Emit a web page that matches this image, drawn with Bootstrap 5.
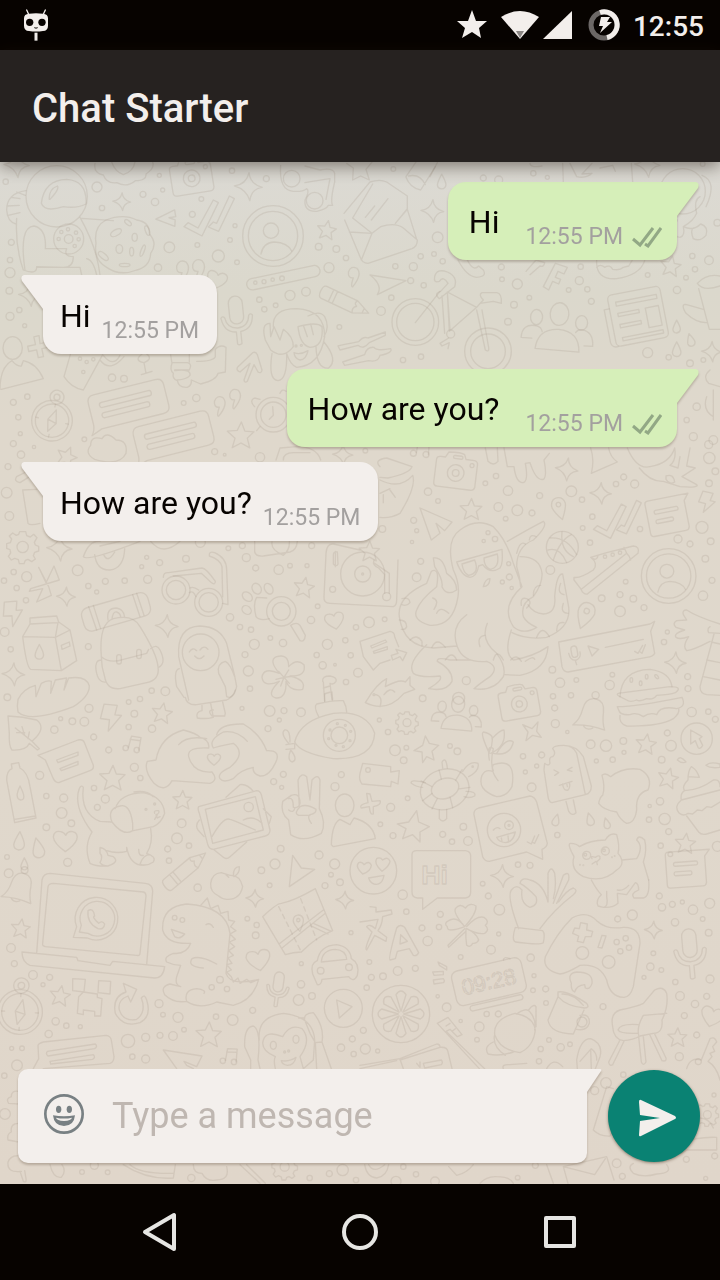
<!DOCTYPE html>
<html lang="en">
<head>
<meta charset="utf-8">
<meta name="viewport" content="width=device-width, initial-scale=1">
<title>Chat Starter</title>
<link href="https://cdn.jsdelivr.net/npm/bootstrap@5.3.0/dist/css/bootstrap.min.css" rel="stylesheet">
<style>
  body { font-family: Roboto, "Noto Sans", sans-serif; background: #070300; color: #070300; }
  svg { display: block; }
  .status-bar { height: 50px; color: #f3efec; padding: 0 16px 0 22px; }
  .status-time { font-size: 28px; line-height: 32px; font-weight: 500; }
  .app-bar { background: #262220; color: #f3efec; min-height: 112px; padding: 6px 32px 0; z-index: 2; box-shadow: 0 4px 16px rgba(30, 20, 10, .5); }
  .app-title { font-size: 40px; line-height: 48px; font-weight: 500; }
  .chat-area { background: linear-gradient(#dcdad4 0, #dbd8cc 130px, #dfd8cc 260px, #e0d8cc 60%, #e0d6ca 100%); }
  .wallpaper { fill: none; stroke: #a3968a; stroke-opacity: .22; stroke-width: 4; stroke-linejoin: round; stroke-linecap: round; }
  .wallpaper text { font-family: "Liberation Sans", sans-serif; }
  .thread { gap: 15px; padding: 20px 43px; }
  .msg { border-radius: 18px; filter: drop-shadow(0 2px 1px rgba(60, 40, 20, .25)); }
  .msg-out { background: #d6efb9; padding: 20px 15px 9px 21px; border-top-right-radius: 0; color: #d6efb9; gap: 26px; }
  .msg-in { background: #f3efec; padding: 21px 18px 9px 17px; border-top-left-radius: 0; color: #f3efec; gap: 11px; }
  .msg-text { font-size: 32px; line-height: 40px; margin-bottom: 9px; color: #070300; }
  .msg-time { font-size: 23px; line-height: 28px; color: #a3a09f; gap: 9px; }
  .msg-out .tail { left: 100%; top: 0; }
  .msg-in .tail { right: 100%; top: 0; }
  .composer { padding: 0 20px 21px 18px; gap: 21px; }
  .entry { background: #f3efec; color: #f3efec; border-radius: 10px 0 10px 10px; min-height: 94px; padding: 0 24px; gap: 26px; filter: drop-shadow(0 2px 1px rgba(60, 40, 20, .25)); }
  .entry .tail { left: 100%; top: 0; }
  .entry input { font-size: 36px; line-height: 44px; color: #070300; outline: 0; }
  .entry input::placeholder { color: #bfb7b1; opacity: 1; }
  .send { width: 92px; height: 92px; background: #0a8273; box-shadow: 0 1px 3px rgba(60, 40, 20, .5); padding-left: 6px; padding-top: 3px; }
  .system-nav { height: 96px; padding: 0 60px; }
</style>
</head>
<body class="min-vh-100 d-flex flex-column">
<div class="status-bar d-flex align-items-center justify-content-between">
  <svg width="28" height="36" viewBox="0 0 84 108" aria-label="System">
    <g fill="none" stroke="#f3efec" stroke-width="4" stroke-linecap="round"><path d="M14 9L21 24M70 9L63 24"/></g>
    <path fill="#f3efec" d="M21 20Q42 17 63 20Q78 21 78 34V56Q78 71 63 72Q42 75 21 72Q6 71 6 56V34Q6 21 21 20Z"/>
    <circle cx="23" cy="46" r="11" fill="#070300"/><circle cx="60" cy="46" r="11" fill="#070300"/>
    <path d="M37 62Q42 65 47 62" stroke="#070300" stroke-width="3" fill="none"/>
    <path d="M42 77V101" stroke="#f3efec" stroke-width="9"/>
  </svg>
  <div class="d-flex align-items-center">
    <svg width="176" height="40" viewBox="0 0 176 40" fill="#f3efec" aria-hidden="true">
      <path d="M15 5L19 16L30 16L22 23L24 33L15 27L5 33L8 23L0 16L11 16Z"/>
      <path d="M44 12Q63 0 82 12L63 34Z"/><path d="M59 26H67L63 33Z" fill="#8b8785"/>
      <path d="M86 34L115 6V34Z"/>
      <g fill="none" stroke-width="5"><circle cx="147" cy="20" r="13" stroke="#6c6866"/><path d="M143 7.500A13 13 0 1 1 150 32.500" stroke="#f3efec"/></g>
      <path d="M144 12H153L150 17H155L143 28L146 21H142Z"/>
    </svg>
    <span class="status-time pt-1">12:55</span>
  </div>
</div>
<header class="app-bar position-relative d-flex align-items-center">
  <h1 class="app-title mb-0">Chat Starter</h1>
</header>

<div class="chat-area position-relative flex-grow-1 d-flex flex-column">
  <svg class="wallpaper position-absolute top-0 start-0 w-100 h-100" viewBox="0 162 720 1022" preserveAspectRatio="xMidYMin slice" aria-hidden="true">
    <defs>
      <g id="dot"><circle r="10"/></g>
      <g id="star"><path d="M2-38L12-12L38-10L19 8L26 36L1 22L-24 35L-16 8L-38-12L-10-14Z"/></g>
      <g id="spark"><path d="M2-38Q5-7 38 2Q8 6 4 38Q-5 8-38-2Q-6-6 2-38Z"/></g>
      <g id="love"><path d="M0 32Q-34 8-36-12Q-34-32-14-28Q-3-26 1-17Q8-31 22-28Q40-24 34-4Q28 12 0 32Z"/></g>
      <g id="drop"><path d="M0-28Q16 0 16 12Q14 26 0 27Q-15 26-16 12Q-15 0 0-28Z"/></g>
      <g id="plane"><path d="M-48-48L48-6L26 20L0-2L12 28L-14 48Z"/></g>
      <g id="ticks"><path d="M-68 32L-56 20L-26 36L20-48L35-40L-14 60ZM5 33L20 18L30 22L68-60L83-52L36 46Z"/></g>
      <g id="user"><circle r="91"/><circle r="74"/><circle cx="-6" cy="-16" r="23"/><path d="M-36 54Q-30 20 4 18Q44 20 56 45"/></g>
      <g id="cam"><path d="M-62-34Q-62-44-50-44H-36L-28-60Q10-64 20-58L26-44H52Q62-42 62-32V36Q60 46 50 46H-50Q-62 46-62 34Z"/><circle r="25"/><circle r="10"/><circle cx="46" cy="-28" r="6"/><rect x="-12" y="-52" width="28" height="9" rx="4"/></g>
      <g id="compass"><circle r="61"/><circle r="50"/><circle cy="-72" r="21"/><circle cy="-72" r="9"/><path d="M6-34L14 6L-6 34L-13-2ZM-13-2L14 6M0-50V-42M0 50V42M-50 0H-42M50 0H42"/></g>
      <g id="mic"><rect x="-22" y="-65" width="44" height="88" rx="22"/><path d="M-50 0Q-44 46-6 48V86Q0 92 8 86V48Q46 44 50 0Q44-8 38 0Q34 34 0 36Q-34 34-38 0Q-44-8-50 0Z"/></g>
      <g id="note"><path d="M-60-50Q-60-60-50-60H80L64-40V44Q62 54 52 54H-50Q-60 54-60 44Z"/><rect x="-36" y="-26" width="76" height="12" rx="5"/><rect x="-36" y="4" width="56" height="12" rx="5"/></g>
      <g id="letter"><path d="M-110-30Q-110-52-90-52H92Q112-52 112-32V28Q112 48 92 48H-90L-122 60Q-110 46-110 30Z"/><rect x="-80" y="-26" width="152" height="15" rx="7"/><rect x="-80" y="4" width="140" height="15" rx="7"/></g>
      <g id="gear"><path d="M-9-46H9L12-34L23-30L33-38L43-28L35-14L38-6L48-2V12L36 16L32 26L38 36L27 44L16 37L8 40L4 50H-10L-13 38L-24 34L-34 39L-43 28L-36 18L-38 8L-48 4V-10L-37-13L-33-24L-40-33L-30-42L-19-35L-12-38Z"/><circle r="17"/></g>
      <g id="bell"><path d="M-55 36Q-32 16-26-18Q-18-60 16-56Q46-50 44-14Q42 20 52 46Q0 30-55 36Z"/><circle cx="14" cy="-68" r="12"/><path d="M-18 38Q-6 52 12 42"/></g>
      <g id="tune"><circle cx="-22" cy="22" r="10"/><circle cx="20" cy="26" r="10"/><path d="M-12 20L-4-24L32-22L28 26M-8-12L31-10"/></g>
      <g id="team"><ellipse cx="0" cy="-50" rx="28" ry="34"/><path d="M-66 58Q-62-2 0-4Q64-2 66 60Z"/><ellipse cx="-68" cy="-36" rx="18" ry="23"/><ellipse cx="68" cy="-28" rx="18" ry="22"/><path d="M-78 28H-110Q-110-16-66-10Q-52-8-48 6M80 40H106Q106-4 70-8Q58-8 52 2"/></g>
      <g id="bolt"><path d="M-22-44L22-40L14-8L36-6L-8 46L-4 8L-34 4Z"/></g>
      <g id="pin"><path d="M0 48Q-30 4-28-14Q-24-42 0-42Q26-40 28-14Q28 4 0 48Z"/><circle cy="-14" r="9"/></g>
      <g id="plus"><path d="M-8-32H8L6-8L32-8V8H8L8 32H-8L-8 8H-32V-8H-8Z"/></g>
      <g id="quote"><path d="M-14-16Q-6-38 14-28Q34-8 0 34Q-8 34 2 4Q-16 6-14-16Z"/></g>
      <g id="pencil"><path d="M-76-22Q-88-22-88 0Q-88 22-76 22H38L88 0L38-22ZM-50-22V22M-36-22V22M38-22Q28-10 42-4Q28 8 38 22M68-8V8"/></g>
    </defs>

    <g transform="translate(0 160) scale(.333333)" data-set="top-left">
      <circle cx="170" cy="109" r="92"/><path d="M124 130Q132 60 200 58Q262 62 258 132Q230 146 190 140Q134 158 124 130ZM148 118Q146 88 172 78Q180 86 150 118M78 92Q20 100 20 150Q22 185 48 192M76 106L50 96M60 116L34 112M58 136L22 138M60 158L24 166M50 175Q45 260 70 330Q110 345 110 322H240L245 345M75 330Q56 200 102 198Q140 206 136 266L200 266Q190 290 220 290Q220 322 190 322L110 320M240 172Q290 260 300 345M245 175L340 182M260 296Q280 300 290 345"/>
      <circle cx="206" cy="237" r="45"/><circle cx="206" cy="237" r="13"/><g><circle cx="176" cy="237" r="5"/><circle cx="184" cy="216" r="5"/><circle cx="204" cy="208" r="5"/><circle cx="228" cy="218" r="5"/><circle cx="236" cy="238" r="5"/><circle cx="224" cy="258" r="5"/></g>
      <path d="M318 180Q370 160 410 180Q450 186 448 222Q474 250 452 280Q450 320 410 330Q360 350 320 322Q280 300 288 250Q280 200 318 180Z"/>
      <g><ellipse cx="348" cy="218" rx="18" ry="9" transform="rotate(-30 348 218)"/><ellipse cx="404" cy="232" rx="8" ry="12"/><ellipse cx="358" cy="267" rx="10" ry="13"/><ellipse cx="395" cy="275" rx="6" ry="13"/><ellipse cx="310" cy="288" rx="18" ry="8" transform="rotate(40 310 288)"/><ellipse cx="374" cy="315" rx="16" ry="5"/><ellipse cx="428" cy="272" rx="5" ry="18" transform="rotate(20 428 272)"/><ellipse cx="384" cy="188" rx="12" ry="6" transform="rotate(40 384 188)"/><ellipse cx="442" cy="212" rx="6" ry="15" transform="rotate(-20 442 212)"/></g>
      <path d="M285 10Q280 40 310 45Q320 72 350 68Q380 84 406 62Q440 62 438 42Q465 25 458 6M335 6Q345 35 370 44Q400 35 405 6"/>
      <path d="M842 16Q836 90 880 94Q908 96 920 86Q930 92 915 120Q912 156 950 154Q980 148 985 136L998 136Q990 124 1004 66V40Q1000 22 960 30L915 18"/><circle cx="875" cy="56" r="25"/><circle cx="944" cy="122" r="25"/><path d="M915 68Q960 60 990 56L978 118"/>
      <path d="M1032 160L1110 66Q1140 56 1160 66L1222 108V146L1186 190M1058 174L1118 72M1058 174L1114 218M1048 216L1116 220L1142 200Q1186 186 1210 204L1252 240Q1252 260 1236 266L1104 310Q1086 310 1080 290L1034 180M1116 220L1084 300M1186 190L1222 148L1250 238M1096 172L1124 138M1114 180L1164 116"/>
      <rect x="738" y="336" width="224" height="34" rx="17" transform="rotate(-12 850 353)"/><circle cx="766" cy="368" r="5"/><circle cx="792" cy="365" r="6"/><circle cx="818" cy="359" r="5"/><circle cx="846" cy="355" r="7"/>
      <path d="M1110 345L1218 362L1132 404Q1150 376 1110 345Z"/>
      <circle cx="1246" cy="486" r="70"/><circle cx="1246" cy="486" r="56"/>
      <path d="M820 500Q816 446 890 446Q974 450 974 530Q960 618 890 622Q870 614 860 580M796 540Q782 490 810 490L812 530L822 500L840 540L850 508Q880 530 880 560Q850 600 812 570ZM894 500Q950 484 966 500Q972 560 930 562Q900 556 894 500M910 496L922 530M932 492L940 524M924 468Q960 450 974 470Q990 500 972 530M816 580Q804 660 834 662Q862 660 860 580M948 560Q950 628 986 624Q1016 600 972 546M882 578Q900 586 924 572Q918 600 900 600Q884 596 882 578"/><circle cx="888" cy="558" r="3"/><circle cx="904" cy="556" r="3"/>
      <path d="M1014 558Q1030 554 1076 545Q1090 528 1104 534L1156 516L1156 526L1108 548Q1090 570 1074 556L1020 570ZM1028 606L1094 584Q1100 560 1122 562Q1130 574 1172 566Q1180 578 1140 586Q1134 608 1106 602L1034 616Z"/>
      <path d="M732 660L750 610L720 636Q706 630 714 620L758 578Q768 574 772 584L786 630Q784 642 774 636L762 614L742 664Q734 670 732 660"/>
      <path d="M512 585L516 610Q508 630 520 640Q516 656 532 662Q536 684 562 682Q576 676 574 660L602 672Q650 660 654 640L676 636L678 562Q660 552 646 568L646 590Q640 604 590 604M516 608H562Q578 612 568 630H524M524 632Q574 626 570 646Q560 658 532 660M568 584V606"/>
      <path d="M212 580L192 650Q214 684 250 690L308 584M300 600Q330 640 372 590M310 586Q340 624 360 586M426 582Q400 602 432 608Q460 596 440 582M432 608L438 640M424 644L456 634"/><circle cx="240" cy="596" r="5"/><circle cx="260" cy="606" r="5"/><circle cx="280" cy="598" r="5"/><circle cx="250" cy="636" r="5"/>
      <ellipse cx="38" cy="564" rx="29" ry="34"/><path d="M0 688Q0 622 36 602Q50 620 64 618L70 602Q110 610 130 656L4 688"/>
      <path d="M284 898Q252 880 272 856Q272 826 306 836Q320 812 348 840Q384 840 378 880Q360 920 284 898"/>
      <circle cx="820" cy="764" r="52"/><circle cx="820" cy="764" r="38"/><path d="M818 740L820 766L808 778M764 740Q746 722 764 714L780 718M780 800L770 812M840 700Q846 684 858 694M828 900L840 864L890 860Q950 860 962 900M850 900Q850 878 880 878H930"/>
      <path d="M1218 50L1252 0M1218 52Q1230 84 1262 90L1306 20M1226 48Q1260 40 1276 74M1040 10L1060 24L1058 60L1082 48L1108 60L1098 28L1116 6"/>
    </g>

    <g transform="translate(430 160) scale(.333333)" data-set="top-right">
      <path d="M0 50L22 8M398 10L400 66M420 10L440 50Q470 56 486 40L456 42L486 10M510 24L548 16L556 34M604 10L608 66M300 10Q300 24 336 18"/>
      <circle cx="758" cy="94" r="68"/><path d="M816 46Q864 64 828 140M742 180Q720 230 750 232Q766 228 760 200Q790 184 800 160Q790 120 810 110M760 200Q790 214 812 192Q836 200 828 226Q810 246 790 236Q780 212 790 204"/>
      <path d="M84 300Q110 350 140 352Q172 350 160 330L146 318Q130 336 112 300M288 334L318 300M300 344L330 318Q342 322 344 308L318 300M340 380L376 310L412 322L402 342L384 334L376 352L392 358L386 372L368 364L356 390ZM500 300Q496 360 560 356Q630 346 644 302M500 322Q510 310 524 322Q540 312 548 328Q570 332 580 322L596 318L606 302"/>
      <path d="M14 350Q20 324 52 336Q84 350 74 380L28 416Q10 400 32 394L54 370Q40 346 28 364Q10 370 14 350M52 396L140 442L150 430L190 424L214 430Q216 400 200 398H156Q144 404 160 420L140 442L58 514ZM52 396L60 508M36 408L44 520M140 450L166 570Q178 578 176 562L156 450"/><circle cx="62" cy="522" r="12"/><path d="M56 534L30 550L36 558L58 548L54 566"/><circle cx="174" cy="574" r="70"/><circle cx="174" cy="574" r="52"/><path d="M-44 488L30 394"/>
      <g transform="rotate(-11 628 468)"><rect x="544" y="390" width="160" height="156" rx="14"/><path d="M544 430H528V530Q530 548 550 546M566 414H690V426H566ZM566 448H630V458H566ZM566 482H630V492H566ZM650 448H690V508H650ZM566 522H690V532H566Z"/></g>
      <path d="M802 370Q830 340 870 348M802 370Q820 396 870 378M806 386L838 508H870M820 448L770 434Q750 430 768 460Q800 490 832 488"/>
    </g>

    <g transform="translate(430 340) scale(.333333)" data-set="right-band">
      <path d="M840 90Q816 110 836 130L870 140M850 150V240M830 170Q816 210 850 230"/>
    </g>

    <g transform="translate(0 440) scale(.333333)" data-set="mid-left">
      <path d="M50 110L90 90L98 104L60 128Q40 124 50 110M68 150L110 148M68 150L84 250Q90 258 120 250M250 350Q268 300 300 304M250 350Q260 366 420 304M300 318L360 304M284 344Q290 392 330 390Q372 384 374 326M312 346Q324 370 344 336M452 304Q490 350 540 304M764 304V336Q768 350 790 348L870 336Q890 330 892 304M816 306Q812 330 850 346Q870 330 868 304"/>
      <path d="M116 382L138 428L162 378L178 420L92 446L88 454L128 446L110 486L154 466L146 440L116 382"/>
      <path d="M68 590L90 552V534L170 528L176 546L210 570L230 662L184 692L92 688Q80 684 68 590ZM90 552L174 548L166 592L68 590M166 592L184 692M166 592L210 570M184 616L208 606L210 618L186 628Z"/>
      <rect x="244" y="480" width="206" height="72" rx="22" transform="rotate(-16 346 512)"/><path d="M266 500L290 570M280 496L302 566M398 464L420 530M410 460L432 526M324 540Q318 504 350 504Q372 508 374 532M336 538Q338 514 350 516Q362 520 362 532M304 650Q296 550 340 536Q400 522 420 560Q470 640 474 680Q480 720 440 728L360 746Q320 750 314 710Q304 680 304 650Q330 672 370 658L440 640L446 628M304 660Q284 660 288 690Q294 730 318 726M452 626Q470 610 480 630Q500 670 476 682"/><rect x="350" y="644" width="14" height="28" rx="7"/><rect x="410" y="628" width="14" height="28" rx="7"/>
      <circle cx="528" cy="450" r="42"/><circle cx="528" cy="450" r="29"/><circle cx="626" cy="487" r="42"/><circle cx="626" cy="487" r="29"/><path d="M570 444Q580 438 596 450M568 458Q580 450 588 470M490 412Q490 396 506 398L606 384Q620 386 646 424Q646 438 632 426L604 400L520 408M668 470L666 380Q660 358 628 348Q626 332 644 338Q680 354 680 390L684 494L668 490"/>
      <path d="M566 780L536 650Q530 560 600 558Q660 560 680 610L704 708L710 740Q700 780 680 770L676 740L656 700Q650 670 676 664Q690 670 704 710M538 686Q520 690 530 740L552 772M568 636Q578 620 590 632M600 630Q612 614 624 628M584 648Q598 664 612 648"/><circle cx="602" cy="637" r="55"/>
      <path d="M800 474L770 472Q758 490 768 530Q780 544 808 536"/><circle cx="844" cy="514" r="44"/><circle cx="844" cy="514" r="27"/><path d="M872 556Q890 544 900 556L916 586Q914 608 900 602Z"/><g><ellipse cx="770" cy="446" rx="13" ry="17" transform="rotate(-30 770 446)"/><ellipse cx="806" cy="446" rx="12" ry="17" transform="rotate(-30 806 446)"/><ellipse cx="742" cy="470" rx="12" ry="17" transform="rotate(-50 742 470)"/><ellipse cx="740" cy="510" rx="12" ry="15" transform="rotate(-50 740 510)"/></g>
      <path d="M838 700Q804 660 830 650Q866 640 866 680Q890 654 912 674Q920 710 870 708Q920 720 908 748Q870 756 858 724Q860 776 828 774Q796 766 838 724Q790 744 786 712Q790 680 838 700ZM852 712L836 694M852 712L866 690M852 712L882 708M852 712L868 730M852 712L842 738M852 712L828 718"/>
      <path d="M54 778Q70 746 106 736L108 770L124 730Q144 720 154 724L152 760L166 720L200 714L192 750L206 714Q260 706 268 738Q268 770 220 800Q90 850 54 816Q50 800 54 778"/>
      <path d="M968 724Q966 708 990 708Q1012 712 1008 724Q1000 736 990 730L996 780M970 726L974 784M970 744L990 738M972 762L992 756"/>
      <path d="M1080 330L1000 312Q980 310 978 340L972 470Q970 490 990 490L1180 500Q1190 496 1190 480L1194 360M1006 334V380M1000 344Q1000 334 1012 336L1014 372Q1010 382 1000 372Z"/><circle cx="998" cy="448" r="9"/><circle cx="1088" cy="402" r="66"/><circle cx="1088" cy="402" r="24"/><circle cx="1088" cy="402" r="3"/>
    </g>

    <g transform="translate(360 440) scale(.333333)" data-set="mid-right">
      <path d="M60 80Q40 60 80 54L156 80Q150 100 84 114L60 112M60 120Q120 150 158 106Q170 140 120 220Q90 236 60 232M60 160L90 146M70 188V164M106 172L90 150M376 24L384 64Q400 80 414 64L412 24M432 24L442 80H462Q468 130 490 128Q506 122 496 70L510 68Q528 124 550 118Q562 110 552 60L568 40M692 24Q704 60 694 100L740 80L772 66Q750 50 746 24M802 24Q830 90 870 80Q930 70 944 24M838 84Q870 126 910 124L960 140Q1020 144 1010 134L966 110L1006 84L980 78L990 24M944 24Q950 60 930 76L954 84L960 50M918 108Q940 100 944 126Q930 136 918 118Z"/>
      <path d="M294 470Q300 430 280 390Q256 300 300 270Q350 232 400 260Q440 300 460 370L486 440Q420 500 460 560Q490 586 530 562Q500 550 490 530Q480 490 520 470Q548 430 546 400Q540 350 480 350M442 304Q500 270 550 244Q566 256 520 300Q470 320 470 380Q480 410 482 440M294 470Q280 560 210 556Q156 540 170 510Q180 480 230 440Q240 380 214 394L200 430Q110 470 118 530Q130 620 220 624L290 618M220 354Q250 350 260 400Q290 420 290 450Q260 470 246 440Q250 420 224 380ZM320 524Q270 560 292 620Q310 670 380 664Q420 680 390 710Q360 730 342 746Q400 756 430 710Q440 680 410 640Q360 600 382 550M200 614Q140 670 160 700Q180 714 240 708Q250 720 206 746Q260 756 276 724Q280 690 232 664Q230 650 270 660L330 660M454 570Q430 640 460 660Q520 650 564 620Q560 690 480 706L434 704M456 578Q500 600 560 592Q640 560 624 490L608 402Q590 400 584 470Q590 520 550 522Q520 520 504 494"/>
      <path d="M290 366L426 328Q430 370 420 384Q390 404 368 374L356 378Q350 410 330 412Q306 410 290 366ZM306 372L344 360Q360 400 326 406Q310 400 306 372ZM372 354L412 342Q420 384 390 388Q372 380 372 354Z"/>
      <path d="M126 476Q148 470 150 488Q140 500 126 494M118 540Q140 540 140 560Q136 570 124 568M150 600Q170 580 186 604V618M216 622Q230 590 256 622M218 474Q240 480 222 508M230 520Q240 496 266 520M370 440Q376 416 390 416Q388 440 370 440M520 466Q520 436 542 436M484 496Q480 470 500 476Q520 486 500 504M530 592Q546 552 568 590M590 572Q590 544 612 548M624 520Q600 520 610 490M612 464Q590 460 602 430M452 660Q470 640 484 664M496 664Q520 646 524 658M256 660Q276 630 290 660M360 620Q350 590 374 586M400 660Q410 624 430 660M470 340Q480 300 496 312M508 300Q510 280 528 290"/>
      <circle cx="607" cy="322" r="48"/><path d="M570 294Q620 290 650 344M580 360Q600 300 634 284M564 330Q600 320 620 368M606 276Q600 330 640 350"/>
      <path d="M642 412Q660 416 700 390Q716 370 692 352L740 338L820 318Q840 320 834 340L682 462Q670 464 662 446L642 420ZM664 448L800 340L792 322M800 340Q810 350 812 360M692 352Q710 366 714 346"/><circle cx="735" cy="350" r="5"/><circle cx="758" cy="344" r="5"/><circle cx="780" cy="338" r="5"/>
      <path d="M596 606L870 552L884 544L872 574L884 640Q880 650 860 652L624 696Q610 696 606 680Z"/><rect x="634" y="618" width="18" height="34" rx="9" transform="rotate(-10 643 635)"/><path d="M626 640Q632 664 650 660Q664 652 660 636M646 662L650 674M684 618L716 628L696 648ZM736 622L850 598M824 634L834 640L848 616M838 634L846 640L856 614"/>
      <path d="M1080 552Q1010 530 980 510Q966 510 970 524L980 540L950 542Q936 550 948 562L974 570Q940 580 948 592Q960 600 986 590Q966 620 980 632Q1000 630 1050 604M1050 560Q1040 566 1046 578L1080 580M1062 582L1020 740Q1020 760 1040 764L1080 766M1054 606L1080 612M1040 660L1080 668M1030 710L1080 720"/>
      <path d="M0 604L90 574Q104 576 104 590L116 620M0 604L10 650L40 690L60 670L90 660M32 618L76 600L80 606L36 624ZM40 634L82 620L82 628L42 640ZM94 646L114 640L108 628L140 638L128 662L120 650L98 660Z"/>
      <path d="M16 788Q50 730 80 716L76 740Q120 716 136 726L150 710L150 736L164 748L132 760Q80 820 16 788ZM48 764Q70 770 60 800M72 764Q90 740 104 756M42 360Q36 376 56 384L74 404V460M44 370L88 400V460"/><circle cx="80" cy="470" r="12"/><circle cx="42" cy="764" r="3"/>
      <path d="M780 770Q784 690 870 688Q930 696 936 740"/><g><ellipse cx="814" cy="720" rx="4" ry="7"/><ellipse cx="860" cy="710" rx="4" ry="7"/><ellipse cx="890" cy="710" rx="4" ry="7" transform="rotate(-40 890 710)"/><ellipse cx="842" cy="730" rx="4" ry="7"/></g>
    </g>

    <g transform="translate(0 680) scale(.333333)" data-set="low-left">
      <path d="M24 108Q70 110 110 120Q136 140 110 170L96 184L118 206L112 210L88 190Q80 212 36 210Q26 200 28 160ZM46 144L96 184M66 140L74 166M50 158H74M84 176L88 156"/>
      <path d="M34 252L56 248L60 264Q84 276 90 320L108 414L44 428L20 300Q20 272 36 266ZM44 418L106 408M60 318Q82 360 62 360Q42 356 60 318"/>
      <path d="M114 226L234 180Q250 176 254 190L280 256Q282 268 270 272L176 308Q166 308 160 296L136 240Z"/><path d="M170 240L234 216V226L174 248ZM180 266L234 244V254L184 272Z"/>
      <path d="M276 456Q226 390 234 340Q240 310 250 322Q240 400 300 424L336 426M346 386Q360 340 430 338Q490 350 494 400Q484 430 460 440L400 452M336 426Q320 386 360 378Q390 370 398 430V452Q370 470 336 426M276 456Q250 500 270 550Q290 560 324 558Q360 546 340 530L324 526Q320 506 300 502V520Q310 530 300 548Q306 558 324 558M320 512Q350 522 380 514V502Q390 556 430 556M452 446Q460 490 440 520Q470 530 460 546Q440 560 420 552Q430 524 450 524M416 508Q416 530 430 526M402 336Q440 330 460 350M464 400Q460 390 476 392Q480 400 468 404L472 414L480 410M472 404L464 418"/><circle cx="438" cy="388" r="3"/><circle cx="464" cy="372" r="3"/>
      <path d="M516 302Q496 340 462 310Q430 270 442 244L468 240Q480 170 550 150Q590 160 600 172Q630 180 626 204Q560 200 566 230Q580 280 636 276Q656 300 630 310L516 302M536 194Q560 166 620 176M650 164Q660 130 730 132Q780 160 800 212Q840 210 830 240Q810 290 780 288Q756 280 760 262Q720 270 700 296Q670 310 660 296Q650 280 690 262Q740 220 700 190Q650 200 640 204Q624 180 670 156Q710 150 742 184"/>
      <path d="M596 380L770 332Q780 332 784 344L810 450Q810 464 796 468L640 508Q628 508 624 496L598 400Q592 386 596 380ZM616 388L766 350L790 450L638 490ZM636 470Q670 410 690 418Q700 420 766 450M730 420Q760 404 786 430M678 352L720 314Q740 310 760 334M640 508L670 532Q680 540 690 530L740 486M598 420Q584 436 594 450L612 470M790 386L814 410L808 430"/><circle cx="746" cy="381" r="14"/>
      <path d="M898 380L894 300Q904 276 920 290L930 360L936 300Q954 280 960 300L958 386Q980 430 964 460Q910 490 872 464L866 420Q840 400 848 364Q870 350 874 346Q900 336 900 370Q896 386 880 382Q880 350 866 356M866 390Q880 400 884 386M900 380Q920 370 948 388Q950 400 930 404Q920 410 934 430M900 380Q880 400 896 406H930"/>
      <ellipse cx="1034" cy="376" rx="28" ry="34"/><path d="M994 494Q996 430 1020 418L1050 434L1062 414Q1120 430 1126 476L1000 500Z"/>
      <path d="M956 110Q940 80 950 72Q1000 60 1030 62Q1040 80 1040 96M974 64V42M998 60L996 36M884 186Q900 120 1000 100Q1100 90 1124 160Q1120 240 1000 236Q900 220 884 186ZM866 190Q840 160 854 150Q870 146 870 186M872 210Q896 240 876 246Q860 240 872 210M858 194L884 190M858 208L884 206V190"/><circle cx="1018" cy="166" r="48"/><circle cx="1018" cy="166" r="25"/><g><circle cx="1012" cy="131" r="3"/><circle cx="1036" cy="136" r="3"/><circle cx="1052" cy="154" r="3"/><circle cx="1050" cy="182" r="3"/><circle cx="1030" cy="200" r="3"/><circle cx="1008" cy="196" r="3"/><circle cx="986" cy="176" r="3"/><circle cx="990" cy="150" r="3"/></g>
      <path d="M556 52Q560 76 590 74L680 60Q700 50 706 30M606 76V92Q586 96 592 114Q616 118 640 112L632 70M640 90Q620 90 636 108H674L676 100L668 66"/>
    </g>

    <g transform="translate(360 680) scale(.333333)" data-set="low-right">
      <path d="M388 240Q380 190 400 206Q390 250 400 272M388 220Q360 160 370 156Q390 160 396 170Q400 190 388 216M396 176Q420 150 432 150Q440 200 392 220M410 220Q440 170 460 186Q450 230 400 220M414 302Q390 270 400 254Q470 230 456 320Q440 350 410 350Q350 330 366 286Q376 266 398 274"/>
      <g transform="rotate(-18 254 328)"><ellipse cx="254" cy="328" rx="74" ry="60"/><ellipse cx="256" cy="326" rx="42" ry="30"/><path d="M214 328L180 340M220 308L194 282M254 296L256 268M294 312L322 288M296 340L328 346M262 356L260 388M224 348L200 372"/></g><path d="M248 264L246 246Q258 228 262 264M308 274Q330 240 354 250Q360 272 326 290M196 308Q150 296 154 310Q170 322 188 322M318 334Q350 334 344 348Q330 356 312 350M238 390V416Q248 430 260 416V388"/><circle cx="338" cy="260" r="2"/>
      <path d="M342 404Q340 390 356 384L510 348Q524 350 530 366L562 490Q560 502 546 508L548 538L500 516L388 544Q374 544 368 530Z"/><circle cx="432" cy="450" r="50"/><circle cx="447" cy="436" r="13"/><circle cx="447" cy="436" r="3"/><path d="M400 450Q410 438 420 446M410 472L466 456Q460 486 436 488Q416 486 410 472M424 474L426 484M444 468L446 486M502 486L514 492L524 468M516 486L524 490L536 464"/>
      <path d="M554 250Q566 260 570 250Q566 230 578 230Q590 220 578 206Q580 196 610 196Q640 196 650 220L676 344L576 368Q566 366 564 350L552 270ZM610 196Q650 196 670 230L694 318Q694 340 676 344M618 364L626 394Q636 410 648 398L640 360M582 270L596 278L584 286M636 262L622 270L636 274M598 316L636 304M608 312Q610 334 624 330Q632 322 628 308M620 310L622 320"/>
      <path d="M726 286Q736 276 752 290Q790 260 840 268Q880 290 864 330Q826 340 830 390Q824 430 800 430Q780 420 770 396Q730 390 716 370Q720 350 728 346Q736 320 726 286Z"/>
      <path d="M1000 264L994 260Q984 272 984 300Q964 320 974 332Q960 340 964 360L1080 330M984 290L1018 292Q1010 270 1000 264M974 332Q1020 330 1060 300Q1080 296 1080 320M964 360Q940 380 958 400Q970 410 984 400L998 402L1012 390L1026 392L1040 380L1054 382L1080 366M980 408L1016 456Q1024 466 1040 462L1080 450M952 240Q960 224 978 246Q966 252 952 240M1038 256Q1050 244 1080 252V262Q1050 266 1038 256"/>
      <path d="M642 530Q620 490 632 490Q650 490 658 500Q690 480 736 480Q750 456 770 464Q780 500 774 520Q800 550 770 570Q730 610 670 590Q630 570 642 530M786 540L830 536Q852 500 830 480Q836 462 854 480Q862 510 850 546L866 600M696 536Q690 526 706 532Q722 522 720 536L710 546L712 554M708 544L696 552"/><circle cx="680" cy="526" r="12"/><circle cx="736" cy="513" r="12"/><circle cx="676" cy="524" r="4"/><circle cx="732" cy="511" r="4"/><circle cx="660" cy="554" r="1"/><circle cx="670" cy="556" r="1"/><circle cx="756" cy="532" r="1"/><circle cx="764" cy="528" r="1"/>
      <path d="M780 50Q760 40 790 38L930 20Q970 20 946 38Q930 44 890 46Q880 60 860 56Q840 66 830 60Q810 68 800 60ZM772 80Q830 80 966 52Q980 80 950 86Q900 76 890 104Q870 96 850 110Q830 96 810 104Q780 106 776 90ZM780 106Q776 130 800 138Q900 140 940 116Q960 100 956 86"/>
      <circle cx="1010" cy="176" r="47"/><path d="M992 150L1026 170L1018 176L1028 196Q1020 210 1014 202L1006 182L992 192Z"/>
      <path d="M8 250L92 260V276L118 272L114 312L94 304L92 320L6 312Q-4 300 0 280Z"/><circle cx="24" cy="270" r="7"/>
      <path d="M20 340L30 342L36 364L60 362Q66 374 40 380L40 402Q30 406 28 380L4 384Q-4 374 24 368ZM196 168L208 190L236 196L216 214L222 240L200 230L188 248L186 216L162 212L188 196ZM170 392L176 426L208 440L180 456L180 486L158 464L128 476L138 446L112 432L146 426ZM516 146L534 126L530 154L544 172L518 166L498 182L504 156L488 134Z"/>
    </g>

    <g transform="translate(0 860) scale(.333333)" data-set="base-left">
      <path d="M110 280L126 60Q130 40 150 40L436 70Q458 72 458 94L440 314M66 276L230 292L234 302L330 316L338 304L494 320Q490 354 464 354L90 316Q66 306 66 276ZM128 250L144 80Q146 70 160 70L430 96Q438 98 438 108L420 280Q420 288 410 286L136 260Q126 258 128 250Z"/><path d="M220 232L230 200A64 64 0 1 1 262 234ZM238 216L244 196A52 52 0 1 1 264 220ZM264 152Q280 142 284 168Q274 170 296 190Q306 180 314 192Q312 210 294 206Q260 190 264 152Z"/>
      <path d="M572 250Q500 254 488 210Q484 140 560 132Q680 140 690 220L678 340Q690 380 776 358Q760 420 700 436L650 426Q600 450 560 424Q550 390 590 386Q620 390 612 400M572 250Q560 284 520 280Q490 290 500 306Q520 316 542 316L530 350Q524 376 542 380L510 372Q480 380 494 404Q520 430 560 424M650 312Q600 284 576 296Q560 320 610 324M514 208L554 222Q540 240 524 230ZM618 194Q630 186 640 202M602 136L622 114L632 146L654 136L662 160L684 154L686 180L704 184L692 200L708 212L690 222L706 238L688 246L704 260L686 272L700 286L684 294L696 310L680 314L694 330L680 336L694 350L700 366L714 354L720 370L740 358L752 368L776 358"/><circle cx="524" cy="173" r="7"/><circle cx="547" cy="180" r="7"/>
      <path d="M656 108Q630 96 632 70Q636 40 664 38L690 46Q720 44 728 80Q720 120 680 118Q664 116 656 108ZM700 48Q700 20 718 20Q720 40 702 50M678 44L686 52"/>
      <path d="M788 170Q830 130 844 130Q880 124 946 86L998 212Q950 230 904 276Q880 276 856 284ZM840 250L970 150M846 264L976 160M930 196L984 222M940 190L994 214"/><path stroke-dasharray="14 12" d="M836 140L904 276M902 116L950 240"/>
      <path d="M938 342Q930 310 952 302Q960 256 1010 254Q1050 260 1054 296Q1080 310 1072 346Q1060 370 1046 350L966 358Q964 376 952 374ZM964 306Q966 270 1006 268Q1038 270 1040 298Z"/><circle cx="962" cy="332" r="10"/><circle cx="1047" cy="322" r="10"/>
      <path d="M218 356L256 358L252 396L218 392ZM296 362L332 364L330 402L294 398ZM236 410L250 396L292 402V412L306 416L302 468H284V454L250 450V464L232 460Z"/>
      <path d="M370 370L410 388L392 426L384 408Q352 420 358 450Q370 486 410 478Q440 456 424 414Q434 400 440 420Q456 470 420 488Q370 504 346 460Q336 410 378 396Z"/>
      <circle cx="1030" cy="445" r="57"/><path d="M1010 420L1056 440L1018 474Z"/>
      <path d="M778 540Q770 470 850 460Q940 470 944 540L940 600L910 626M826 626Q820 600 826 590Q780 570 790 540Q800 510 848 530Q870 490 906 506Q936 540 900 590L910 626M734 560Q732 500 760 498Q784 510 774 600L780 626M734 560L752 600V626M914 480Q910 460 940 458Q974 500 966 546L946 548L930 520ZM966 546L994 626M946 548L950 626M844 602Q870 606 888 592Q882 616 862 616Q846 614 844 602M896 474L914 474"/><ellipse cx="820" cy="556" rx="9" ry="12"/><ellipse cx="888" cy="538" rx="9" ry="12"/><circle cx="854" cy="576" r="3"/><circle cx="866" cy="573" r="3"/>
      <path d="M114 556Q116 550 130 546L318 526Q332 528 334 540L342 590Q342 606 330 610L130 626M114 556L116 596L100 626M142 574L286 552Q294 560 284 566L144 588Q136 582 142 574ZM150 604L280 584Q288 592 278 598L152 612ZM490 570L606 588L590 620L552 604L560 616L580 626M490 570L530 626"/>
      <path d="M868 80L878 -14L904 24L944 28Z"/>
    </g>

    <g transform="translate(360 860) scale(.333333)" data-set="base-right">
      <circle cx="40" cy="32" r="70"/><path d="M26 54L72 46Q66 78 42 72Q30 68 26 54M8 42Q-16 20 -4 8Q6 4 12 14Q28 0 34 16Q32 34 8 42M66 34Q40 10 50-4Q60-10 68 0Q84-12 90 4Q88 18 66 34"/>
      <path d="M156-16Q156-28 170-28H316Q332-26 332-12V96Q332 112 316 114H232L188 148V114H172Q156 112 156 96Z"/><text x="184" y="72" font-size="80" font-weight="700">Hi</text>
      <path d="M30 140L48 142V156L94 150L96 162L68 170Q66 196 54 212L80 232L78 244L44 226L20 270Q12 268 36 216L20 200Q28 190 46 206L54 178L0 186M90 300Q84 296 110 204Q120 190 134 202L176 278Q170 290 160 286L148 266L112 274L106 296ZM120 252L122 224L142 244Z"/>
      <path d="M314 200Q280 160 286 146Q300 128 316 144Q330 126 348 138Q350 160 314 200Q260 220 262 200Q250 190 266 182Q290 166 314 200M320 200Q350 166 372 172Q390 184 376 196Q390 210 374 220Q350 224 320 206Q350 220 356 240Q350 252 338 250Q330 264 320 256Q316 230 318 206M314 206L264 256L266 262L318 214"/>
      <path d="M476 206Q440 110 454 90Q470 70 486 90Q480 130 510 142Q536 136 528 110Q500 80 480 70Q484 50 510 60Q550 70 564 126M564 126V40Q574 14 584 40Q590 80 580 116M580 130L610 46Q630 30 626 60L590 130M540 206Q580 150 640 104Q656 90 640 84Q620 90 596 126M466 202L548 212Q556 220 550 248Q540 256 466 246Q454 240 466 202"/>
      <path d="M694 60Q710 90 724 104Q706 120 714 138L730 142Q746 140 740 110L740 94M730 142Q760 144 774 130L772 100L800 104L826 68Q836 70 836 90Q810 100 822 114L850 114Q870 110 866 60M772 90Q790 94 806 76"/>
      <path d="M556 290Q590 220 636 174Q680 150 710 182Q740 210 790 202Q840 200 840 250L820 380Q810 414 790 412Q750 410 740 360Q720 310 660 316Q620 340 600 342Q546 330 556 290ZM662 188L682 192L680 210L698 214L694 230L676 230L670 248L652 244L656 228L638 220L644 204L658 206ZM726 226L738 228L726 264L714 262Z"/><circle cx="667" cy="279" r="19"/><circle cx="746" cy="306" r="19"/>
      <g transform="rotate(-13 387 366)"><rect x="280" y="312" width="214" height="106" rx="20"/><rect x="314" y="424" width="162" height="16" rx="8"/><path d="M444 312Q446 300 464 312"/><text x="304" y="388" font-size="66" stroke-dasharray="18 6">09:28</text></g>
      <path d="M218 336L250 334V344L222 346ZM220 360L250 356Q256 364 250 368L222 372ZM234 306L260 320V330L238 316Z"/>
      <circle cx="123" cy="462" r="86"/><g><path id="wedge" d="M123 454L108 404Q123 382 138 404Z"/><use href="#wedge" transform="rotate(45 123 462)"/><use href="#wedge" transform="rotate(90 123 462)"/><use href="#wedge" transform="rotate(135 123 462)"/><use href="#wedge" transform="rotate(180 123 462)"/><use href="#wedge" transform="rotate(225 123 462)"/><use href="#wedge" transform="rotate(270 123 462)"/><use href="#wedge" transform="rotate(315 123 462)"/></g>
      <path d="M404 524Q400 476 466 460Q520 470 526 510Q520 560 480 578Q420 570 404 524ZM404 524Q396 560 436 586M400 546Q370 560 384 582Q420 590 460 576M470 462Q500 440 510 456Q530 480 524 510M506 450Q520 430 528 440V500"/>
      <path d="M232 490L264 472L306 524L292 530L270 508L258 514L374 626M232 490L358 626M258 498L270 490M276 514L286 506"/>
      <path d="M594 396Q620 390 680 430Q690 444 674 444Q620 440 594 410ZM594 410L564 480Q570 520 640 522L654 490L672 450M606 402Q640 400 670 436M660 466Q690 460 688 490Q680 514 650 508M634 370Q620 340 650 336Q700 336 696 370Q690 390 676 384L674 374Q650 376 644 396Q632 390 634 370"/><circle cx="666" cy="486" r="15"/>
      <path d="M758 500Q750 460 780 450Q830 440 850 430L884 390Q910 376 920 400Q926 440 906 480Q910 520 880 520L840 528Q820 540 790 542Q760 536 758 500ZM850 466L920 460M850 466Q830 500 836 526M834 494Q780 490 774 510Q780 522 834 520M780 540L746 606Q748 620 758 614L792 544M836 530L844 606Q850 620 858 606L850 530M870 526L906 602Q920 606 918 594L884 522"/>
      <path d="M0 616L120 596L230 552Q240 552 240 562L120 600M120 598L130 626M240 562Q262 560 264 576L276 626M0 626L110 602M190 610L244 600Q250 608 244 614L194 624ZM170 610L180 622L180 606M430 626Q424 612 450 614L500 610M560 626Q580 590 608 620M652 626L650 600Q660 536 692 536Q730 550 720 590L706 626M660 604L694 566Q712 580 710 600M692 570L694 626M980 626Q990 590 1024 600L1050 536Q1064 528 1070 546L1058 560L1064 574L1050 580L1056 590L1044 604Q1070 620 1080 660"/>
    </g>

    <g transform="translate(0 1050) scale(.333333)" data-set="foot">
      <path d="M56 124Q34 120 34 140Q16 146 26 160L56 162M56 220Q30 220 34 246Q20 252 24 270L56 276M64 364Q20 370 24 336Q34 310 70 320M60 364L70 394Q80 400 78 386L74 362M150 344Q160 386 184 382Q200 364 186 344M370 344Q440 390 520 384L526 344M390 344Q420 372 520 370M580 344Q580 370 606 370Q620 396 650 390Q690 390 680 350M720 344L780 400M740 344L796 400M1094 344Q1100 382 1130 384Q1160 380 1166 344M1106 344Q1120 372 1154 344M1346 350L1370 376Q1400 370 1420 344M1440 400Q1460 378 1490 380Q1530 380 1540 400M1640 344L1660 400M1690 350L1820 320L1842 390M1690 350L1704 400M1690 350L1784 374L1816 326M1780 240L1820 110L1840 116M1780 240Q1800 260 1830 258L1850 220M2080 270Q2050 200 2100 204Q2130 206 2140 234M2040 280Q2090 260 2150 262V300H2060L2044 310Q2030 300 2040 280M1900 340Q1880 350 1900 370Q1930 384 1970 372Q2020 370 2000 344"/>
    </g>
  </svg>

  <main class="thread position-relative flex-grow-1 d-flex flex-column">
    <div class="msg msg-out position-relative align-self-end d-flex align-items-end">
      <span class="msg-text">Hi</span>
      <span class="msg-time d-flex align-items-center">12:55 PM <svg width="30" height="22" viewBox="0 0 30 22" fill="none" stroke="#92a885" stroke-width="3" aria-label="Delivered"><path d="M1 13L8 19L21 2M13 18L16 20L29 2"/></svg></span>
      <svg class="tail position-absolute" width="22" height="35" viewBox="0 0 22 35" fill="currentColor" aria-hidden="true"><path d="M0 0H19Q23 1 21 6L0 34Z"/></svg>
    </div>
    <div class="msg msg-in position-relative align-self-start d-flex align-items-end">
      <span class="msg-text">Hi</span>
      <span class="msg-time">12:55 PM</span>
      <svg class="tail position-absolute" width="22" height="35" viewBox="0 0 22 35" fill="currentColor" aria-hidden="true"><path d="M22 0H3Q-1 1 1 6L22 34Z"/></svg>
    </div>
    <div class="msg msg-out position-relative align-self-end d-flex align-items-end">
      <span class="msg-text">How are you?</span>
      <span class="msg-time d-flex align-items-center">12:55 PM <svg width="30" height="22" viewBox="0 0 30 22" fill="none" stroke="#92a885" stroke-width="3" aria-label="Delivered"><path d="M1 13L8 19L21 2M13 18L16 20L29 2"/></svg></span>
      <svg class="tail position-absolute" width="22" height="35" viewBox="0 0 22 35" fill="currentColor" aria-hidden="true"><path d="M0 0H19Q23 1 21 6L0 34Z"/></svg>
    </div>
    <div class="msg msg-in position-relative align-self-start d-flex align-items-end">
      <span class="msg-text">How are you?</span>
      <span class="msg-time">12:55 PM</span>
      <svg class="tail position-absolute" width="22" height="35" viewBox="0 0 22 35" fill="currentColor" aria-hidden="true"><path d="M22 0H3Q-1 1 1 6L22 34Z"/></svg>
    </div>
  </main>

  <form class="composer position-relative d-flex align-items-center" onsubmit="return false">
    <div class="entry position-relative flex-grow-1 d-flex align-items-center">
      <button type="button" class="btn p-0 border-0 mb-1" aria-label="Emoji">
        <svg width="44" height="44" viewBox="0 0 132 132"><circle cx="66" cy="66" r="56" fill="none" stroke="#788083" stroke-width="8"/><g fill="#788083"><ellipse cx="50" cy="52" rx="8" ry="11"/><ellipse cx="82" cy="52" rx="8" ry="11"/><path d="M33 70Q66 76 99 70Q96 102 66 102Q36 102 33 70Z"/></g><path d="M42 77Q66 82 90 77Q88 86 66 87Q44 86 42 77Z" fill="#f3efec"/></svg>
      </button>
      <input type="text" class="flex-grow-1 w-100 border-0 bg-transparent p-0" placeholder="Type a message" aria-label="Type a message">
      <svg class="tail position-absolute" width="15" height="24" viewBox="0 0 15 24" fill="currentColor" aria-hidden="true"><path d="M0 0H13Q15 0 14 2L0 23Z"/></svg>
    </div>
    <button type="submit" class="send btn border-0 rounded-circle flex-shrink-0 d-flex align-items-center justify-content-center pb-0 pe-0" aria-label="Send">
      <svg width="38" height="38" viewBox="0 0 38 38" fill="#f3efec"><path d="M3 1L37 17Q39 19 37 20L3 37Q1 38 1 36L2 22L22 19L2 16L1 3Q1 0 3 1Z"/></svg>
    </button>
  </form>
</div>

<nav class="system-nav d-flex align-items-center" aria-label="System">
  <button type="button" class="btn border-0 flex-fill d-flex justify-content-center" aria-label="Back"><svg width="40" height="40" viewBox="0 0 40 40" fill="none" stroke="#e6e6e3" stroke-width="4" stroke-linejoin="round"><path d="M34 3V37L5 20Z"/></svg></button>
  <button type="button" class="btn border-0 flex-fill d-flex justify-content-center" aria-label="Home"><svg width="40" height="40" viewBox="0 0 40 40" fill="none" stroke="#e6e6e3" stroke-width="4"><circle cx="20" cy="20" r="16"/></svg></button>
  <button type="button" class="btn border-0 flex-fill d-flex justify-content-center" aria-label="Recent apps"><svg width="40" height="40" viewBox="0 0 40 40" fill="none" stroke="#e6e6e3" stroke-width="4" stroke-linejoin="round"><path d="M6 6H34V34H6Z"/></svg></button>
</nav>

<script src="https://cdn.jsdelivr.net/npm/bootstrap@5.3.0/dist/js/bootstrap.bundle.min.js"></script>
<script>
  // Repeated wallpaper doodles: "x,y[,scale[,rotation]]" lists per doodle, grouped by wallpaper section.
  const doodles = {
    'top-left': {
      spark: '50,15,1 745,80,1.1 365,125,.7 1297,153,.9 90,405,.9',
      star: '980,210,.75,8 722,826,1.05 200,890,.8,20',
      cam: '575,55,1,-9', ticks: '620,168,1', plane: '508,174,.6,-50', user: '819,228,1',
      mic: '710,470,.95,-6', compass: '156,782,1,12', plus: '116,560,1,-12', love: '650,360,.85,15',
      quote: '544,334,1 592,330,1 1058,350,.9 656,738,.9 702,716,.9', letter: '385,735,1.05,-14 520,830,1.05,-14',
      pencil: '1034,426,.9,25',
      dot: '17,65,.8 291,81,1.5 429,103,.9 306,144,.8 465,126,1.1 488,90,.6 478,46,.6 604,117,.7 577,163,.9 705,197,.6 690,240,.7 592,255,.7 508,262,1.6 655,288,1.8 474,323,1.1 711,307,.7 34,247,.9 30,300,.8 30,338,1.5 28,392,1 30,469,1.2 74,497,.6 58,450,.8 956,260,1 1009,267,1 1038,294,.8 987,323,1.5 1186,319,.8 1240,320,1.2 1262,289,.8 1302,282,.7 1232,362,.9 1271,376,.8 870,406,1.5 918,395,1.3 778,419,.8 793,448,.8 827,436,.7 1174,413,.8 1143,453,1.3 1018,501,.7 1209,600,.8 1263,590,.8 336,653,1.1 372,656,1 551,729,.7 589,714,1.1 82,710,.8 40,727,.9 55,772,.8 61,821,.6 40,851,.9 102,861,.5 63,884,1.1 253,838,.7 644,875,.9 674,884,.4 780,892,1.4 696,32,.8 799,56,.9 1180,27,.7 1313,232,1.6'
    },
    'top-right': {
      spark: '652,14,1 845,575,.8', star: '722,318,.8,8', team: '385,512,1,4', drop: '35,65,.8 740,500,.7 782,540,.7,-15 740,568,.8',
      dot: '310,40,.8 352,52,.6 160,54,.9 206,60,1.2 818,12,.7 862,188,1 38,304,.8 214,321,.9 216,358,.7 262,372,1.5 298,413,.7 252,434,1 234,485,1 416,390,.7 448,362,1.2 472,388,.8 484,424,.9 452,320,.8 653,345,.7 768,353,.7 795,328,.8 837,301,1.3 787,288,.8 741,390,1.1 653,578,1.5 716,592,.8'
    },
    'right-band': {
      dot: '780,70,1 800,200,1.1 770,240,.8 790,290,1.2 850,300,1.3 820,60,.7'
    },
    'mid-left': {
      gear: '68,321,1', spark: '178,325,1 198,470,.75 500,558,.9 40,703,.9 1028,44,.8', star: '912,442,.8,8 1108,334,.8', bolt: '38,520,.85,-10', love: '1004,542,.8,-12', drop: '118,636,.8',
      dot: '24,80,.9 20,158,1.6 28,228,1.3 12,422,.8 41,396,.8 80,410,1.5 50,444,.8 78,481,.8 14,576,1.3 32,628,.8 233,391,1.6 265,438,.8 290,456,.6 316,424,.9 374,422,.8 425,380,.6 440,352,.6 443,418,1.2 479,368,.9 558,356,1 601,307,1.5 685,325,.7 727,317,.9 739,353,1.2 767,384,.9 836,389,1.4 870,377,.7 921,377,.6 935,317,.9 953,499,.7 933,540,1.1 690,532,1.1 720,561,.8 753,569,.8 811,594,.7 849,609,1.1 763,613,1.5 735,644,.9 745,693,1.5 750,746,.8 982,613,1.5 1036,601,.8 1068,562,.8 950,645,.8 968,676,1.1 1005,674,.4 1052,646,.8 1074,698,1.3 1038,726,.8 265,620,.9'
    },
    'mid-right': {
      cam: '287,99,1,7', spark: '620,88,.9,6 722,160,.85 946,668,.85', star: '333,208,.85', plane: '228,252,1', ticks: '765,238,.95', note: '920,230,.95,-11', bolt: '1040,186,.7,8', user: '926,408,.9',
      pin: '598,204,.75,-15 676,525,.9,20', tune: '180,20,.9',
      dot: '16,32,.7 67,267,1 161,241,.9 170,272,.6 156,306,.5 204,155,1.1 234,183,.7 182,364,.9 170,412,1.3 376,130,.7 408,108,.8 444,152,1.4 415,201,1.3 437,236,.7 472,211,1.6 516,219,.9 539,167,.9 634,154,1.6 666,179,.8 697,230,.8 668,264,.7 690,308,.8 768,132,.8 791,111,.9 824,132,1.2 840,267,.8 1046,14,1.2 1048,54,1.7 1066,94,1 1047,130,1 1026,262,1.8 954,297,1.2 990,312,.9 1052,304,1 1036,356,1 1056,421,.9 1029,467,1.4 571,390,1.3 797,425,.7 725,475,1 780,464,.9 820,476,1 852,503,.9 780,514,1.6 912,606,.8 922,576,.6 983,710,.9 984,746,.9 757,704,.7 749,735,1.4 649,720,.7 600,728,1.4 577,689,1 579,769,.8 633,766,.8 319,722,1.2 188,775,1 296,775,1.8 27,547,1.6 74,538,.7 371,303,.5 405,297,.8 384,278,.6 446,371,.6 448,411,.9 427,426,.6 455,444,.5'
    },
    'low-left': {
      bolt: '332,112,.9', star: '486,99,.8,8 337,294,1 547,360,.75', tune: '396,188,.8,5', love: '196,483,1 642,238,.55', drop: '58,483,1,4 114,504,1.1,-12 73,552,.65', pencil: '556,570,.9,-40',
      dot: '22,52,1 267,85,1.2 182,116,.6 163,149,1.1 217,124,1 253,125,1.3 281,171,.9 326,210,.9 386,141,.8 403,101,1 386,66,.7 420,57,.8 455,32,.8 496,34,1.3 456,146,1.1 403,262,1.2 421,294,.8 119,286,1.2 139,348,.8 191,354,1.2 185,399,1.6 214,430,1 139,442,1 282,324,.8 316,357,1.2 292,382,.9 203,547,1.2 21,531,.7 26,580,1.3 545,430,1.3 531,475,1.6 567,497,.8 503,507,.9 507,542,.8 726,85,.6 809,93,1.6 852,92,.9 903,97,1.3 838,120,.6 804,146,.9 850,283,.9 821,305,.9 845,322,.6 1024,284,.9 1005,320,1.2 842,506,1 825,552,1.5 784,571,1 957,525,1.2 1004,552,1.5'
    },
    'low-right': {
      gear: '141,128,.7', team: '292,108,.7,4', cam: '478,72,.95,-10', bell: '690,106,.9,4', star: '858,192,.8,6 924,294,.8,12 976,490,.8,4', drop: '588,420,.65,15 690,418,.7,-15 740,430,.6,-15', note: '976,570,.95,-4',
      dot: '58,120,.6 84,156,.8 105,211,1.6 139,203,.7 131,241,1 270,198,.7 292,214,1 92,382,1.2 143,355,.7 61,433,.7 99,467,.9 248,463,.9 276,485,.8 324,483,1.3 310,440,1 489,229,.8 545,225,.9 530,258,.6 496,276,.6 515,322,1.3 584,84,.9 586,131,1.2 622,156,.5 692,193,1.3 738,197,1.7 790,183,1 792,217,.6 758,239,.8 709,243,.6 922,159,.9 933,197,1.6 995,96,1.4 1045,95,.8 1066,118,.9 905,239,1 900,364,1.1 869,378,.5 867,419,.8 914,417,1.7 926,455,.9 902,497,.8 931,523,.7 592,465,.8 474,554,.8 510,556,.9 1072,499,1.5'
    },
    'base-left': {
      bell: '54,86,.85,8', star: '62,205,.75,6 180,407,.8,8 626,524,1', love: '776,300,1,-10', spark: '764,115,.7 1034,120,.7', compass: '60,456,1.1,3', mic: '834,380,.68,8', tune: '686,585,.8', pin: '896,188,.55,-8',
      dot: '33,264,1.3 43,311,.9 99,345,1.3 149,352,.9 129,374,.6 167,484,1.1 199,497,.8 241,500,.6 146,522,1.1 35,565,.6 66,565,.7 51,616,1.6 477,431,1.2 489,464,.7 534,472,1.5 552,509,.7 519,528,1.3 480,526,.9 437,532,1.2 384,543,2 397,590,.8 437,597,1.2 648,470,.8 698,480,1.6 758,451,.9 660,359,1 635,382,.8 681,387,.8 593,83,1.1 809,76,.7 742,176,.7 770,195,.8 767,226,1 904,311,.6 903,373,1.1 936,408,1 896,420,1.6 975,77,.9 1020,67,1 993,44,.7 1053,218,.6 1057,537,.9 1023,563,1.1 1061,582,.8'
    },
    'base-right': {
      spark: '426,48,.9 880,210,.7', star: '952,532,.75', mic: '990,270,.98,-5', love: '1056,470,.95,15',
      dot: '128,104,1.4 139,155,.8 186,204,.9 203,243,1.4 241,163,.9 237,201,.8 302,291,.7 393,269,1.3 416,222,.6 418,149,1.6 385,108,.9 368,71,.7 28,306,.7 34,352,.9 69,349,1 113,333,1.3 166,325,.9 20,383,.8 233,409,.5 260,442,1.3 302,483,.5 358,500,1.4 351,539,.7 380,462,.8 415,462,.9 512,293,1.1 522,347,.6 519,391,.7 557,387,.9 558,429,.7 567,540,.7 542,567,.8 602,562,1.1 630,553,.7 537,604,.8 773,177,.9 817,165,1.5 770,246,.8 797,235,.8 781,274,.8 807,263,.8 906,142,1.1 898,108,.9 937,133,.9 967,126,.6 999,149,1.4 1049,130,1.5 1028,177,.7 945,187,1.1 1046,218,1 880,280,.7 871,320,1.1 904,330,.7 852,352,.6 946,366,.8 960,408,1.3 1005,432,1.1 1040,409,.9 1050,357,1.2 973,467,.9 1010,525,.9 958,590,1.2 729,440,.9 10,511,.9 16,567,1.5 53,573,.6 790,644,.8 738,669,1.6'
    },
    foot: {
      gear: '854,350,.8 2122,194,.7',
      dot: '13,77,.8 15,192,1.6 283,346,1.2 246,366,.7 323,367,.7 574,384,1.1 929,384,.8 988,371,.9 1028,360,1.7 1068,390,.8 1210,350,.8 1248,373,.8 1188,394,1.5 1305,394,1.3 1553,383,.7 1606,346,.9 1850,340,1.3 1867,379,.9 2117,385,.6 1784,122,1.2 2095,35,.9 2142,135,.6 2059,328,.9 2144,318,.9'
    }
  };
  const lineWidth = 4;
  for (const [section, kinds] of Object.entries(doodles)) {
    const group = document.querySelector(`[data-set="${section}"]`);
    for (const [kind, list] of Object.entries(kinds)) {
      for (const item of list.split(' ').filter(Boolean)) {
        const [x, y, scale = 1, turn = 0] = item.split(',').map(Number);
        const use = document.createElementNS('http://www.w3.org/2000/svg', 'use');
        use.setAttribute('href', '#' + kind);
        use.setAttribute('stroke-width', lineWidth / scale);
        use.setAttribute('transform', `translate(${x} ${y}) rotate(${turn}) scale(${scale})`);
        group.append(use);
      }
    }
  }
</script>
</body>
</html>
